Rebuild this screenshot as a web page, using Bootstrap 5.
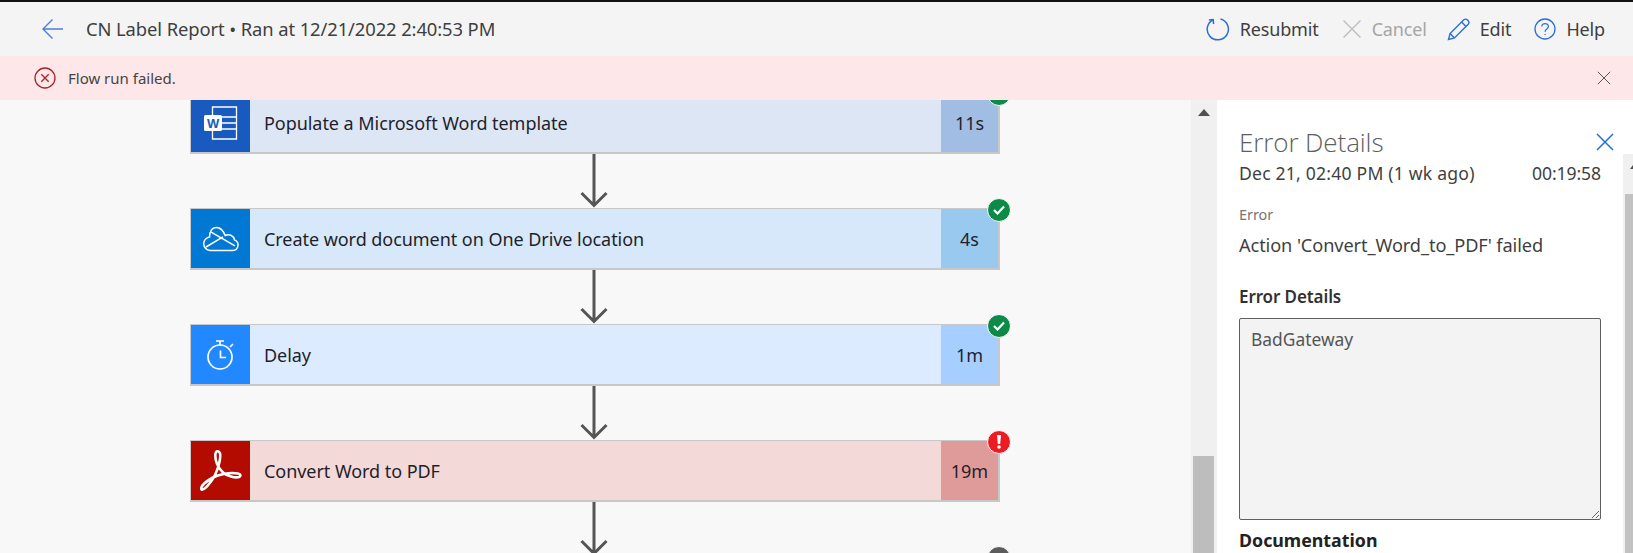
<!doctype html>
<html lang="en">
<head>
<meta charset="utf-8">
<title>CN Label Report</title>
<link href="https://cdn.jsdelivr.net/npm/bootstrap@5.3.0/dist/css/bootstrap.min.css" rel="stylesheet">
<style>
html,body{height:553px;overflow:hidden}
body{font-family:"Noto Sans","Open Sans",sans-serif;background:#f8f8f8;color:#323130;border-top:2px solid #111}
.top-bar{height:54px;background:#f4f4f4;padding:0 28px 0 42px}
.back-btn{width:44px}
.run-title{font-size:18.4px;color:#3f3f3f;letter-spacing:-.1px}
.cmd{font-size:18px;color:#3f3f3f;letter-spacing:-.15px;gap:10px;margin-right:23px}
.cmd:last-child{margin-right:0}
.cmd-off{color:#a6a6a6;margin-right:20px}
.fail-banner{height:44px;background:#fde7e9;padding:0 22px 0 34px;border:0;border-radius:0;margin:0;font-size:15px;color:#444}
.main-area{height:453px;overflow:hidden}
.flow-canvas{width:1191px;overflow:hidden;background:#f8f8f8;padding:0 0 0 190px}
.flow-stack{width:810px;margin-top:-8px}
.step-card{height:62px;border:1px solid #c8c8c8;border-width:1px 2px 2px 1px;font-size:18px;color:#1f1f2b;border-radius:0;letter-spacing:-.05px}
.step-ico{width:59px;flex:none}
.step-name{padding:2px 0 0 14px}
.step-time{width:57px;flex:none;padding-top:2px}
.st-word{background:#dde6f5}.st-word .step-ico{background:#185abd}.st-word .step-time{background:#a2bde4}
.st-drive{background:#d6e8f9}.st-drive .step-ico{background:#0078d4}.st-drive .step-time{background:#99c9ee}
.st-delay{background:#dcebff}.st-delay .step-ico{background:#2188ff}.st-delay .step-time{background:#a6cfff}
.st-pdf{background:#f3d9d7}.st-pdf .step-ico{background:#b30b00}.st-pdf .step-time{background:#df9b99}
.step-badge{position:absolute;right:-13px;top:-11px;width:24px;height:24px;border-radius:50%;border:1px solid #fff}
.b-ok{background:#0d8a47}.b-bad{background:#ec1c24}.b-idle{background:#5c5c5c}
.link-arrow{height:54px;margin-left:-2px}
.bar-one{width:26px;background:#f0f0f0}
.bar-one-up{height:24px}
.bar-one-gap{height:332px}
.bar-thumb{background:#bdbdbd;margin:0 3px 0 2px;flex:1}
.detail-pane{width:416px;background:#fff}
.pane-head{height:54px;padding:29px 19px 0 22px}
.pane-title{font-size:26px;line-height:22px;font-weight:300;color:#605e5c;font-family:"Open Sans",sans-serif;letter-spacing:-.1px}
.pane-main{padding:0 22px 0 22px;width:406px;color:#3f3f3f}
.bar-two{width:10px;background:#f0f0f0}
.bar-two-up{height:40px}
.bar-two-thumb{background:#c2c2c2;margin-left:2px;flex:1}
.when-row{font-size:17.6px;height:38px;color:#3f3f3f;letter-spacing:-.1px}
.when-date{letter-spacing:.2px}
.err-cap{font-size:14.4px;color:#767676;margin-top:13px;line-height:20px}
.err-text{font-size:18.2px;margin-top:8px;line-height:24px;letter-spacing:-.1px}
.field-cap{font-size:17px;font-weight:600;margin-top:28px;line-height:24px;color:#323130;letter-spacing:-.1px}
.detail-box{height:202px;margin-top:9px;background:#f3f3f3!important;border:1px solid #5f5f5f;border-radius:2px;font-size:17.4px;font-family:inherit;color:#555;padding:7px 11px;width:362px;opacity:1}
.doc-cap{font-size:17.8px;font-weight:700;margin-top:8px;line-height:24px;color:#222}
</style>
</head>
<body>
<header class="top-bar d-flex align-items-center justify-content-between">
  <div class="d-flex align-items-center">
    <div class="back-btn d-flex align-items-center">
      <svg width="22" height="22" viewBox="0 0 22 22" fill="none" stroke="#4a7fe0" stroke-width="1.4"><path d="M1 11H21M10.500 1.500 1 11l9.500 9.500"/></svg>
    </div>
    <div class="run-title">CN Label Report&nbsp;• Ran at 12/21/2022 2:40:53 PM</div>
  </div>
  <div class="d-flex align-items-center">
    <div class="cmd d-flex align-items-center">
      <svg width="24" height="24" viewBox="0 0 24 24" fill="none" stroke="#2b6fd4" stroke-width="1.5"><path d="M7.200 2.700A10.600 10.600 0 1 0 14.500 2"/><path d="M7.600 7 7.200 2.600 2.900 3"/></svg>
      <span>Resubmit</span>
    </div>
    <div class="cmd cmd-off d-flex align-items-center">
      <svg width="20" height="20" viewBox="0 0 20 20" fill="none" stroke="#bdbdbd" stroke-width="1.4"><path d="M1.500 1.500l17 17M18.500 1.500l-17 17"/></svg>
      <span>Cancel</span>
    </div>
    <div class="cmd d-flex align-items-center">
      <svg width="23" height="23" viewBox="0 0 23 23" fill="none" stroke="#2b6fd4" stroke-width="1.4"><path d="M1.500 21.500l1.600-6L16.800 1.800a2.400 2.400 0 0 1 3.400 0l1 1a2.400 2.400 0 0 1 0 3.400L7.500 19.900z"/><path d="M3.100 15.500l4.400 4.400M14.600 4l4.400 4.400"/></svg>
      <span>Edit</span>
    </div>
    <div class="cmd d-flex align-items-center">
      <svg width="22" height="22" viewBox="0 0 22 22" fill="none" stroke="#2b6fd4" stroke-width="1.3"><circle cx="11" cy="11" r="10"/><path d="M7.800 8.600c0-4.100 6.600-4.100 6.600 0 0 2.600-3.300 2.400-3.300 5.200"/><circle cx="11.100" cy="16.400" r=".7" fill="#2b6fd4" stroke="none"/></svg>
      <span>Help</span>
    </div>
  </div>
</header>
<div class="alert fail-banner d-flex align-items-center justify-content-between" role="alert">
  <div class="d-flex align-items-center gap-2">
    <svg class="me-1" width="22" height="22" viewBox="0 0 22 22" fill="none" stroke="#a4262c" stroke-width="1.3"><circle cx="11" cy="11" r="10"/><path d="M7.300 7.300l7.400 7.400M14.700 7.300l-7.400 7.400"/></svg>
    <span>Flow run failed.</span>
  </div>
  <svg width="14" height="14" viewBox="0 0 14 14" fill="none" stroke="#555" stroke-width="1"><path d="M.8.8l12.400 12.400M13.200.8.8 13.200"/></svg>
</div>
<main class="main-area d-flex">
  <section class="flow-canvas">
    <div class="flow-stack d-flex flex-column">
      <div class="step-card st-word d-flex position-relative">
        <div class="step-ico d-flex align-items-center justify-content-center">
          <svg width="36" height="34" viewBox="0 0 36 34" fill="none" stroke="#fff" stroke-width="1.3"><path d="M9.500 1h24v32h-24zM9.500 11h24M9.500 17h24M9.500 23h24"/><rect x="1" y="9" width="18" height="16" rx="1.500" fill="#fff" stroke="none"/><text x="10" y="22" font-family="Liberation Sans,sans-serif" font-size="13" font-weight="700" fill="#185abd" stroke="none" text-anchor="middle">W</text></svg>
        </div>
        <div class="step-name flex-grow-1 d-flex align-items-center">Populate a Microsoft Word template</div>
        <div class="step-time d-flex align-items-center justify-content-center">11s</div>
        <span class="step-badge b-ok d-flex align-items-center justify-content-center"><svg width="12" height="10" viewBox="0 0 12 10" fill="none" stroke="#fff" stroke-width="2.200"><path d="M1 5l3.500 3.500L11 1.500"/></svg></span>
      </div>
      <div class="link-arrow d-flex justify-content-center"><svg width="30" height="54" viewBox="0 0 30 54" fill="none" stroke="#555" stroke-width="3"><path d="M15 0v51M2.500 39 15 51.500 27.500 39"/></svg></div>
      <div class="step-card st-drive d-flex position-relative">
        <div class="step-ico d-flex align-items-center justify-content-center">
          <svg width="36" height="26" viewBox="0 0 36 26" fill="none" stroke="#fff" stroke-width="1.500"><path d="M7 24.500h22.500a5.500 5.500 0 0 0 2-10.600C30.500 9.500 26 7.500 22.200 9.500 20 4 16.500 1.500 13.500 1.500 9 1.500 6.500 5.500 6.500 11A6.800 6.800 0 0 0 7 24.500z"/><path d="M3 21 20 10.800M7.700 5.800 32 19.800"/></svg>
        </div>
        <div class="step-name flex-grow-1 d-flex align-items-center">Create word document on One Drive location</div>
        <div class="step-time d-flex align-items-center justify-content-center">4s</div>
        <span class="step-badge b-ok d-flex align-items-center justify-content-center"><svg width="12" height="10" viewBox="0 0 12 10" fill="none" stroke="#fff" stroke-width="2.200"><path d="M1 5l3.500 3.500L11 1.500"/></svg></span>
      </div>
      <div class="link-arrow d-flex justify-content-center"><svg width="30" height="54" viewBox="0 0 30 54" fill="none" stroke="#555" stroke-width="3"><path d="M15 0v51M2.500 39 15 51.500 27.500 39"/></svg></div>
      <div class="step-card st-delay d-flex position-relative">
        <div class="step-ico d-flex align-items-center justify-content-center">
          <svg width="28" height="30" viewBox="0 0 28 30" fill="none" stroke="#fff" stroke-width="1.700"><circle cx="13" cy="17" r="12"/><path d="M9 1h8M13 1v4M23 7l3-3M13.500 10.500v7H19"/></svg>
        </div>
        <div class="step-name flex-grow-1 d-flex align-items-center">Delay</div>
        <div class="step-time d-flex align-items-center justify-content-center">1m</div>
        <span class="step-badge b-ok d-flex align-items-center justify-content-center"><svg width="12" height="10" viewBox="0 0 12 10" fill="none" stroke="#fff" stroke-width="2.200"><path d="M1 5l3.500 3.500L11 1.500"/></svg></span>
      </div>
      <div class="link-arrow d-flex justify-content-center"><svg width="30" height="54" viewBox="0 0 30 54" fill="none" stroke="#555" stroke-width="3"><path d="M15 0v51M2.500 39 15 51.500 27.500 39"/></svg></div>
      <div class="step-card st-pdf d-flex position-relative">
        <div class="step-ico d-flex align-items-center justify-content-center">
          <svg width="42" height="42" viewBox="0 0 42 42" fill="none" stroke="#fff" stroke-width="2.600" stroke-linejoin="round"><path d="M1.500 39.500C4 40.500 11 33 15 25 18.500 18 21 8 20 3.500 19 .5 16 .5 15.500 3.500 14.500 10 18 18 23 22.500 28 27 36 28 39 27 41 26 41 24 38 23.500 30 22 19 24 12 28 6 31.500 0 36.500 1.500 39.500Z"/></svg>
        </div>
        <div class="step-name flex-grow-1 d-flex align-items-center">Convert Word to PDF</div>
        <div class="step-time d-flex align-items-center justify-content-center">19m</div>
        <span class="step-badge b-bad d-flex align-items-center justify-content-center"><svg width="6" height="14" viewBox="0 0 6 14" fill="#fff"><path d="M1 0h4L4.200 9H1.800z"/><circle cx="3" cy="12" r="1.800"/></svg></span>
      </div>
      <div class="link-arrow d-flex justify-content-center"><svg width="30" height="54" viewBox="0 0 30 54" fill="none" stroke="#555" stroke-width="3"><path d="M15 0v51M2.500 39 15 51.500 27.500 39"/></svg></div>
      <div class="step-card d-flex position-relative"><span class="step-badge b-idle"></span></div>
    </div>
  </section>
  <div class="bar-one d-flex flex-column">
    <div class="bar-one-up d-flex align-items-center justify-content-center"><svg width="12" height="7" viewBox="0 0 12 7" fill="#505050"><path d="M6 0l6 7H0z"/></svg></div>
    <div class="bar-one-gap"></div>
    <div class="bar-thumb"></div>
  </div>
  <aside class="detail-pane d-flex flex-column">
    <div class="pane-head d-flex justify-content-between align-items-center">
      <div class="pane-title">Error Details</div>
      <svg width="18" height="18" viewBox="0 0 18 18" fill="none" stroke="#1b72d8" stroke-width="1.500"><path d="M1 1l16 16M17 1 1 17"/></svg>
    </div>
    <div class="d-flex flex-grow-1">
      <div class="pane-main">
        <div class="when-row d-flex justify-content-between align-items-center"><span class="when-date">Dec 21, 02:40 PM (1 wk ago)</span><span>00:19:58</span></div>
        <div class="err-cap">Error</div>
        <div class="err-text">Action 'Convert_Word_to_PDF' failed</div>
        <div class="field-cap">Error Details</div>
        <textarea class="form-control detail-box" disabled>BadGateway</textarea>
        <div class="doc-cap">Documentation</div>
      </div>
      <div class="bar-two d-flex flex-column">
        <div class="bar-two-up"><svg width="10" height="40" viewBox="0 0 10 40" fill="#505050"><path d="M10 11 7 15H10z"/></svg></div>
        <div class="bar-two-thumb"></div>
      </div>
    </div>
  </aside>
</main>
<script src="https://cdn.jsdelivr.net/npm/bootstrap@5.3.0/dist/js/bootstrap.bundle.min.js"></script>
</body>
</html>
